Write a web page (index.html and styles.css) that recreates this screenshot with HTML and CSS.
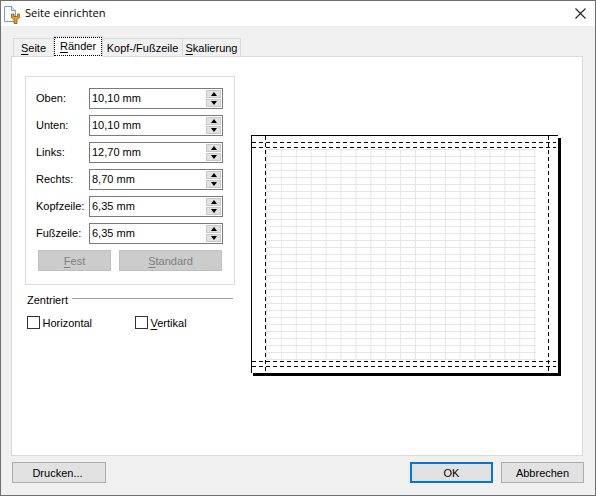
FILE: index.html
```html
<!DOCTYPE html>
<html lang="de">
<head>
<meta charset="utf-8">
<title>Seite einrichten</title>
<link rel="stylesheet" href="styles.css">
</head>
<body>
<div class="dialog">
  <header class="titlebar">
    <svg class="app-icon" width="17" height="18" viewBox="0 0 17 18">
      <path d="M.5 .5H7.500L11.500 4.500V15.500H.5Z" fill="#fff" stroke="#6f9fd8"/>
      <path d="M7.500 .5V4.500H11.500" fill="#d7e6f6" stroke="#6f9fd8"/>
      <path d="M7.500 8V11.500L10 13.500V17.500H13V13.500L15.500 11.500V8H13.500V10.500H10V8Z" fill="#e8a020" stroke="#8a5410" stroke-width=".8"/>
    </svg>
    <span class="title">Seite einrichten</span>
    <svg class="close" width="11" height="11" viewBox="0 0 11 11">
      <path d="M.5 .5L10.500 10.500M10.500 .5L.5 10.500" stroke="#222" stroke-width="1.100"/>
    </svg>
  </header>
  <div class="body">
    <nav class="tabs">
      <div class="tab tab-seite"><u>S</u>eite</div>
      <div class="tab tab-active"><span class="focus"><u>R</u>änder</span></div>
      <div class="tab tab-kopf">Kopf-/Fußzeile</div>
      <div class="tab tab-skal"><u>S</u>kalierung</div>
    </nav>
    <main class="panel">
      <section class="left">
        <div class="group">
          <div class="row"><label>Oben:</label><div class="spin"><span class="value">10,10 mm</span><span class="spin-btns"><i class="up"></i><i class="down"></i></span></div></div>
          <div class="row"><label>Unten:</label><div class="spin"><span class="value">10,10 mm</span><span class="spin-btns"><i class="up"></i><i class="down"></i></span></div></div>
          <div class="row"><label>Links:</label><div class="spin"><span class="value">12,70 mm</span><span class="spin-btns"><i class="up"></i><i class="down"></i></span></div></div>
          <div class="row"><label>Rechts:</label><div class="spin"><span class="value">8,70 mm</span><span class="spin-btns"><i class="up"></i><i class="down"></i></span></div></div>
          <div class="row"><label>Kopfzeile:</label><div class="spin"><span class="value">6,35 mm</span><span class="spin-btns"><i class="up"></i><i class="down"></i></span></div></div>
          <div class="row"><label>Fußzeile:</label><div class="spin"><span class="value">6,35 mm</span><span class="spin-btns"><i class="up"></i><i class="down"></i></span></div></div>
          <div class="group-btns">
            <div class="btn btn-disabled btn-fest"><u>F</u>est</div>
            <div class="btn btn-disabled btn-std"><u>S</u>tandard</div>
          </div>
        </div>
        <div class="center-head"><span>Zentriert</span><span class="rule"></span></div>
        <div class="checks">
          <div class="check check-h"><span class="box"></span><span>Horizontal</span></div>
          <div class="check"><span class="box"></span><span><u>V</u>ertikal</span></div>
        </div>
      </section>
      <svg class="preview" width="312" height="244" viewBox="0 0 312 244">
        <defs>
          <pattern id="cells" x="15" y="14" width="14.900" height="7" patternUnits="userSpaceOnUse">
            <path d="M.5 0V7M0 .5H14.900" stroke="#e6e6e6" fill="none"/>
          </pattern>
        </defs>
        <rect x="2" y="3" width="308" height="238" fill="#000"/>
        <rect x="0" y="0" width="307" height="238" fill="#000"/>
        <rect x="1" y="1" width="306" height="237" fill="#fff"/>
        <rect x="15" y="14" width="270" height="211" fill="url(#cells)"/>
        <g stroke="#000" fill="none" stroke-dasharray="4 3">
          <path d="M14.500 1V238M297.500 1V238"/>
          <path d="M1 7.500H305M1 12.500H305M1 226.500H305M1 231.500H305"/>
        </g>
      </svg>
    </main>
    <footer class="actions">
      <div class="btn btn-print"><span class="print-label">Drucken...</span></div>
      <div class="actions-right">
        <div class="btn btn-ok">OK</div>
        <div class="btn btn-cancel">Abbrechen</div>
      </div>
    </footer>
  </div>
</div>
</body>
</html>
```
FILE: styles.css
```css
* { box-sizing: border-box; }
html, body { margin: 0; padding: 0; }
body {
  font-family: "Liberation Sans", Arial, sans-serif;
  font-size: 11px;
  color: #000;
}
u { text-underline-offset: 2px; text-decoration-thickness: 1px; }
.dialog {
  width: 596px;
  height: 496px;
  border: 1px solid #6f6f6f;
  background: #f0f0f0;
  display: flex;
  flex-direction: column;
}
.titlebar {
  height: 25px;
  background: #fff;
  display: flex;
  align-items: center;
  padding: 0 9px 0 3px;
  flex: none;
}
.app-icon { flex: none; margin-top: 2px; }
.title {
  margin-left: 4px;
  padding-bottom: 2px;
  font-family: "Open Sans", "Noto Sans", sans-serif;
  font-size: 11.100px;
  flex: 1;
}
.body {
  flex: 1;
  display: flex;
  flex-direction: column;
  padding: 10px 11px 12px 10px;
}
.tabs {
  display: flex;
  align-items: flex-end;
  height: 21px;
  padding-left: 2px;
  position: relative;
  z-index: 1;
  margin-bottom: -1px;
  flex: none;
}
.tab {
  height: 18px;
  border: 1px solid #d9d9d9;
  border-bottom: 0;
  background: #f0f0f0;
  display: flex;
  align-items: center;
  justify-content: center;
  margin-bottom: 1px;
  margin-left: -1px;
  line-height: 14px;
}
.tab-seite { width: 41px; margin-left: 0; }
.tab-active {
  width: 50px;
  height: 21px;
  background: #fff;
  margin-bottom: 0;
  padding-bottom: 1px;
}
.tab-kopf { width: 81px; }
.tab-skal { width: 59px; }
.focus {
  outline: 1px dotted #000;
  outline-offset: 0;
  padding: 1px 3px 1px;
  width: 46px;
  height: 17px;
  text-align: center;
}
.panel {
  height: 400px;
  width: 572px;
  background: #fff;
  border: 1px solid #d9d9d9;
  display: flex;
  padding: 19px 13px 0 13px;
  gap: 17px;
}
.left { width: 209px; flex: none; }
.group {
  width: 210px;
  height: 209px;
  border: 1px solid #dcdcdc;
  padding: 11px 11px 0 10px;
}
.row {
  display: flex;
  align-items: center;
  height: 21px;
  margin-bottom: 6px;
}
.row label { width: 53px; flex: none; padding-bottom: 2px; }
.spin {
  width: 134px;
  height: 21px;
  border: 1px solid #7a7a7a;
  display: flex;
  align-items: center;
  padding-left: 2px;
  justify-content: space-between;
}
.value { padding-bottom: 2px; }
.spin-btns {
  width: 15px;
  height: 17px;
  margin-right: 1px;
  display: flex;
  flex-direction: column;
  gap: 1px;
}
.spin-btns i {
  flex: 1;
  background: #e1e1e1;
  border: 1px solid #c8c8c8;
  position: relative;
  display: flex;
  align-items: center;
  justify-content: center;
}
.spin-btns i::after {
  content: "";
  width: 0;
  height: 0;
  border-left: 3.500px solid transparent;
  border-right: 3.500px solid transparent;
}
.up::after { border-bottom: 4px solid #000; }
.down::after { border-top: 4px solid #000; }
.group-btns {
  display: flex;
  gap: 8px;
  padding-left: 2px;
  margin-top: 1px;
}
.btn {
  height: 21px;
  display: flex;
  align-items: center;
  justify-content: center;
  border: 1px solid #adadad;
  background: #e1e1e1;
}
.btn-disabled {
  background: #cccccc;
  border-color: #bfbfbf;
  color: #7e7e7e;
}
.btn-fest { width: 73px; }
.btn-std { width: 103px; }
.center-head {
  display: flex;
  align-items: center;
  height: 16px;
  margin: 7px 0 0 2px;
  width: 206px;
}
.rule {
  flex: 1;
  height: 1px;
  background: #a0a0a0;
  margin: 0 0 3px 4px;
}
.checks {
  display: flex;
  margin: 8px 0 0 2px;
}
.check {
  display: flex;
  align-items: center;
  gap: 2.500px;
  height: 13px;
}
.check-h { width: 108px; }
.box {
  width: 13px;
  height: 13px;
  border: 1px solid #333;
  background: #fff;
  flex: none;
}
.preview { margin-top: 59px; flex: none; display: block; }
.actions {
  display: flex;
  justify-content: space-between;
  margin-top: 6px;
  padding-left: 1px;
  flex: none;
}
.actions-right { display: flex; gap: 8px; }
.btn-print { width: 94px; }
.print-label { padding-right: 3px; }
.btn-ok { width: 83px; border: 2px solid #0078d7; }
.btn-cancel { width: 83px; }
```
